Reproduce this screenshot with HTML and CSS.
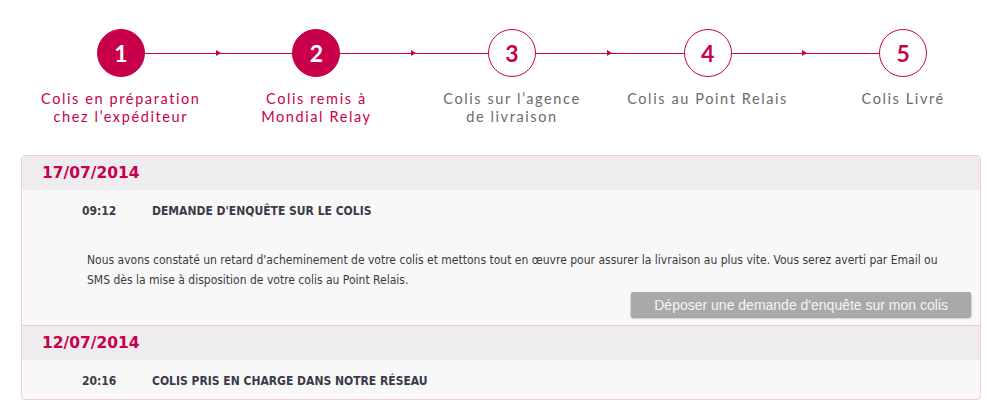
FILE: index.html
```html
<!DOCTYPE html>
<html lang="fr">
<head>
<meta charset="utf-8">
<title>Suivi de colis</title>
<link rel="stylesheet" href="styles.css">
</head>
<body>
<div class="page">
  <ol class="steps">
    <li class="step done"><span class="circle">1</span><span class="label">Colis en préparation<br>chez l’expéditeur</span></li>
    <li class="step done"><span class="circle">2</span><span class="label">Colis remis à<br>Mondial Relay</span></li>
    <li class="step"><span class="circle">3</span><span class="label">Colis sur l’agence<br>de livraison</span></li>
    <li class="step"><span class="circle">4</span><span class="label">Colis au Point Relais</span></li>
    <li class="step last"><span class="circle">5</span><span class="label">Colis Livré</span></li>
  </ol>

  <div class="card">
    <section class="day">
      <h2 class="date">17/07/2014</h2>
      <div class="event">
        <span class="time">09:12</span>
        <span class="title">DEMANDE D'ENQUÊTE SUR LE COLIS</span>
      </div>
      <p class="desc">Nous avons constaté un retard d'acheminement de votre colis et mettons tout en œuvre pour assurer la livraison au plus vite. Vous serez averti par Email ou SMS dès la mise à disposition de votre colis au Point Relais.</p>
      <div class="actions"><button class="btn" type="button">Déposer une demande d'enquête sur mon colis</button></div>
    </section>
    <section class="day">
      <h2 class="date">12/07/2014</h2>
      <div class="event">
        <span class="time">20:16</span>
        <span class="title">COLIS PRIS EN CHARGE DANS NOTRE RÉSEAU</span>
      </div>
    </section>
  </div>
</div>
</body>
</html>
```

FILE: styles.css
```css
html, body {
  margin: 0;
  padding: 0;
  background: #ffffff;
  overflow: hidden;
}

.page {
  padding: 29px 0 0 21px;
  width: 960px;
}

.steps {
  list-style: none;
  margin: 0 0 0 2px;
  padding: 0;
  display: grid;
  grid-template-columns: repeat(5, 195.6px);
  width: 978px;
}

.step {
  position: relative;
  display: flex;
  flex-direction: column;
  align-items: center;
}

/* connecting line to next step */
.step::after {
  content: "";
  position: absolute;
  left: 50%;
  width: 100%;
  top: 24px;
  height: 1px;
  background: #c8004b;
  z-index: 0;
}

/* arrow head at midpoint */
.step::before {
  content: "";
  position: absolute;
  left: calc(100% - 3px);
  top: 21px;
  width: 0;
  height: 0;
  border-top: 3.5px solid transparent;
  border-bottom: 3.5px solid transparent;
  border-left: 5px solid #c8004b;
  z-index: 1;
}

.step.last::after,
.step.last::before {
  display: none;
}

.circle {
  position: relative;
  z-index: 2;
  box-sizing: border-box;
  width: 48px;
  height: 48px;
  border-radius: 50%;
  border: 1px solid #c8004b;
  background: #ffffff;
  color: #c8004b;
  font-family: "Lato", "Noto Sans", sans-serif;
  font-weight: 700;
  font-size: 23px;
  display: flex;
  align-items: center;
  justify-content: center;
}

.step.done .circle {
  background: #c8004b;
  color: #ffffff;
}

.label {
  margin-top: 13px;
  text-align: center;
  font-family: "Lato", "Noto Sans", sans-serif;
  font-size: 14.5px;
  line-height: 17.5px;
  letter-spacing: 1.6px;
  color: #6a6a6a;
  white-space: nowrap;
}

.step.done .label {
  color: #c8004b;
}

.card {
  margin-top: 30px;
  border: 1px solid #f4c9d9;
  border-radius: 4px;
  background: #f8f8f8;
  overflow: hidden;
  font-family: "DejaVu Sans Condensed", "DejaVu Sans", sans-serif;
  color: #3b3b3b;
}

.day + .day {
  border-top: 1px solid #f4c9d9;
}

.date {
  margin: 0;
  height: 34px;
  display: flex;
  align-items: center;
  padding-left: 20px;
  background: #eeecef;
  color: #c8004b;
  font-family: "DejaVu Sans", sans-serif;
  font-weight: 700;
  font-size: 15.5px;
}

.event {
  display: flex;
  align-items: center;
  height: 36px;
  padding: 3px 0 0 60px;
  font-weight: 700;
  font-size: 12px;
  color: #3a3a48;
}

.time {
  width: 70px;
}

.desc {
  margin: 21px 0 0 65px;
  padding-right: 30px;
  font-size: 12px;
  line-height: 20px;
  color: #3b3b3b;
}

.actions {
  display: flex;
  justify-content: flex-end;
  padding: 2px 9px 8px 0;
}

.btn {
  font-family: "Liberation Sans", Arial, sans-serif;
  font-size: 14px;
  color: #f4f4f4;
  background: #a9a9a9;
  border: none;
  border-radius: 2px;
  height: 25px;
  padding: 0 23px;
  box-shadow: 0 1px 2px rgba(0, 0, 0, 0.45);
}
```
